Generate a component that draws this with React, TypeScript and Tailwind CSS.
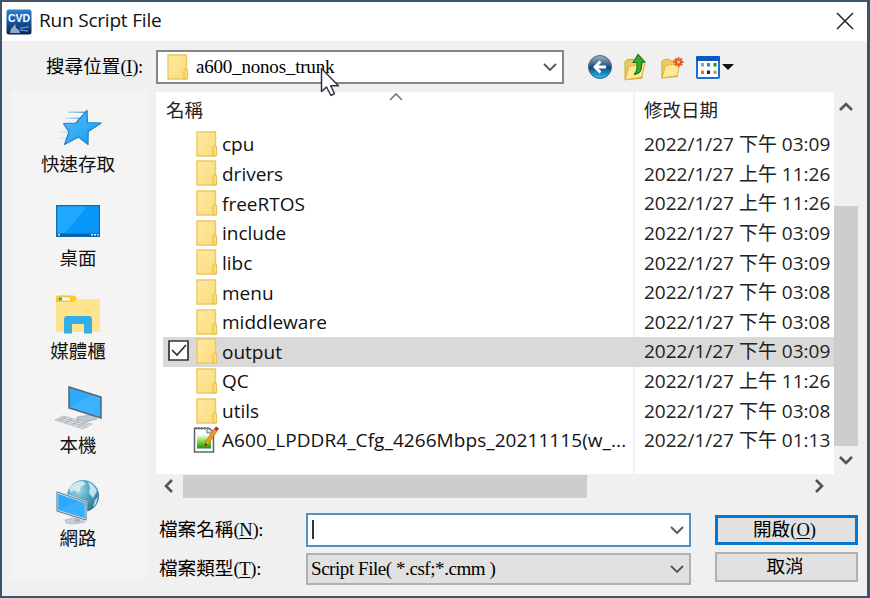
import React from "react";

const SANS = "font-['Open_Sans','Noto_Sans_CJK_TC',sans-serif]";
const SERIF = "font-['Liberation_Serif','Noto_Sans_CJK_TC',serif]";

const files = [
  { name: "cpu", date: "2022/1/27 下午 03:09" },
  { name: "drivers", date: "2022/1/27 上午 11:26" },
  { name: "freeRTOS", date: "2022/1/27 上午 11:26" },
  { name: "include", date: "2022/1/27 下午 03:09" },
  { name: "libc", date: "2022/1/27 下午 03:09" },
  { name: "menu", date: "2022/1/27 下午 03:08" },
  { name: "middleware", date: "2022/1/27 下午 03:08" },
  { name: "output", date: "2022/1/27 下午 03:09", selected: true },
  { name: "QC", date: "2022/1/27 上午 11:26" },
  { name: "utils", date: "2022/1/27 下午 03:08" },
];

function Folder() {
  return (
    <svg width="22" height="26" viewBox="0 0 22 26" className="block shrink-0">
      <defs>
        <linearGradient id="fold" x1="0" y1="0" x2="1" y2="1">
          <stop offset="0" stopColor="#ffe9a3" />
          <stop offset="1" stopColor="#fbdc7c" />
        </linearGradient>
      </defs>
      <path d="M1 1h18.5v24H1z" fill="url(#fold)" stroke="#ecc95c" strokeWidth="1.4" />
      <path d="M17 24.8v-8.3q0-1.5 1.8-1.5t1.8 1.5v8.3z" fill="#fbdc7c" stroke="#e8c04a" strokeWidth="1.1" />
    </svg>
  );
}

function Chevron({ dir, size = 14, color = "#555", weight = 1.8 }: { dir: "up" | "down" | "left" | "right"; size?: number; color?: string; weight?: number }) {
  const d = {
    down: "M1 4l6 6 6-6",
    up: "M1 10l6-6 6 6",
    left: "M10 1L4 7l6 6",
    right: "M4 1l6 6-6 6",
  }[dir];
  return (
    <svg width={size} height={size} viewBox="0 0 14 14" className="block shrink-0">
      <path d={d} fill="none" stroke={color} strokeWidth={weight} />
    </svg>
  );
}

function AppIcon() {
  return (
    <svg width="26" height="26" viewBox="0 0 26 26" className="block">
      <defs>
        <linearGradient id="app" x1="0" y1="0" x2="0" y2="1">
          <stop offset="0" stopColor="#2b82cf" />
          <stop offset=".45" stopColor="#1559a6" />
          <stop offset="1" stopColor="#0c2452" />
        </linearGradient>
      </defs>
      <rect x=".5" y=".5" width="25" height="25" rx="2.5" fill="url(#app)" />
      <text x="13" y="13" textAnchor="middle" textLength="22" lengthAdjust="spacingAndGlyphs" fontFamily="Liberation Sans" fontWeight="700" fontSize="11" fill="#fff">CVD</text>
      <path d="M4 24c1-4 1-5 3-6l2-3 1 4 3 2 1 3z" fill="#b9c9dc" opacity=".8" />
      <path d="M14 19l9-1M14 21l8 1" stroke="#5b8cc4" strokeWidth="1.4" />
    </svg>
  );
}

function BackIcon() {
  return (
    <svg width="26" height="26" viewBox="0 0 26 26">
      <defs>
        <linearGradient id="back" x1="0" y1="0" x2="0" y2="1">
          <stop offset="0" stopColor="#a3b3c6" />
          <stop offset=".35" stopColor="#4a6c94" />
          <stop offset=".52" stopColor="#0e4a80" />
          <stop offset="1" stopColor="#28c4f2" />
        </linearGradient>
      </defs>
      <circle cx="13" cy="13" r="11.5" fill="url(#back)" stroke="#456788" strokeWidth="1" />
      <path d="M12.5 6.5L6 13l6.5 6.5 1.9-1.9-2.9-3H19v-3.1h-7.5l2.9-3z" fill="#fff" />
    </svg>
  );
}

function OpenFolder() {
  return (
    <>
      <path d="M2 24.5V6.5l2-2 6-.6 2 2 7-1v18z" fill="#eac960" stroke="#d5a93a" strokeWidth="1" />
      <path d="M2 24.5l4-13.5 16-2.5-3.5 13.5z" fill="#ffe995" stroke="#dcb044" strokeWidth="1" />
    </>
  );
}

function UpIcon() {
  return (
    <svg width="26" height="28" viewBox="0 0 26 28">
      <g transform="translate(0 2.3)"><OpenFolder /></g>
      <path d="M11 21.500c3-2 3.300-6 3-12h-4L15 1.500l7 7.500-3.500.500c.600 7-.600 11-7.500 12z" fill="#38a834" stroke="#157a19" strokeWidth="1.100" />
    </svg>
  );
}

function NewFolderIcon() {
  return (
    <svg width="26" height="26" viewBox="0 0 26 26">
      <g transform="translate(1 1.500) scale(.92 .92)"><OpenFolder /></g>
      <path d="M19.500 3v10M14.500 8h10M16 4.500l7 7M23 4.500l-7 7" stroke="#f2521f" strokeWidth="1.900" />
      <circle cx="19.500" cy="8" r="2.400" fill="#ffc35c" stroke="#ee4a1b" strokeWidth="1.300" />
    </svg>
  );
}

function ViewIcon() {
  return (
    <svg width="24" height="23" viewBox="0 0 24 23" className="block">
      <rect x="1" y="1" width="22" height="21" rx="1" fill="#fff" stroke="#176fd8" strokeWidth="2" />
      <path d="M0 1q0-1 1-1h22q1 0 1 1v4H0z" fill="#0d59c0" />
      <path d="M5 7h3v3.500H5z" fill="#9c94cc" />
      <path d="M11 7h3v3.500h-3z" fill="#2d86d8" />
      <path d="M17.500 7h3v3.500h-3z" fill="#149228" />
      <path d="M5 14.500h3V18H5z" fill="#ef6733" />
      <path d="M11 14.500h3V18h-3z" fill="#14227e" />
      <path d="M17.500 14.500h3V18h-3z" fill="#d19c15" />
    </svg>
  );
}

function StarIcon() {
  return (
    <svg width="48" height="38" viewBox="0 0 48 38">
      <defs>
        <linearGradient id="star" x1="0" y1="0" x2="1" y2="1">
          <stop offset="0" stopColor="#53bdf9" />
          <stop offset="1" stopColor="#189bef" />
        </linearGradient>
        <linearGradient id="streak">
          <stop offset="0" stopColor="#7fc7ef" stopOpacity="0" />
          <stop offset="1" stopColor="#4aa4da" />
        </linearGradient>
      </defs>
      <path d="M14 2.500h18v1.500H14zM11 8.500h19V10H11zM5 22.500h14V24H5zM1 28.500h15V30H1z" fill="url(#streak)" />
      <path d="M33 1.300l.500 12.200 13.700.500-13 8.500-.200 13-9.500-7.500-14 7.500 4.500-12.500-5.500-8.500 12.500-.500z" fill="url(#star)" stroke="#2281bd" strokeWidth="1.200" strokeLinejoin="round" />
    </svg>
  );
}

function DesktopIcon() {
  return (
    <svg width="44" height="32" viewBox="0 0 44 32">
      <path d="M.700.700h42.600v30.600H.700z" fill="#16a0fb" stroke="#126ab0" strokeWidth="1.400" />
      <path d="M9 28L31 1.500h11.500V28z" fill="#0797fb" />
      <path d="M9 28L31 1.500H1.500V28z" fill="#1fa8fd" />
      <path d="M1 28.500h42V31H1z" fill="#0961a8" />
      <path d="M2 29h2v1.500H2zM35 29h2v1.500h-2zM38 29h2v1.500h-2zM41 29h1.500v1.500H41z" fill="#d7eefc" />
    </svg>
  );
}

function LibraryIcon() {
  return (
    <svg width="44" height="39" viewBox="0 0 44 39">
      <path d="M0 3q0-2.500 2.500-2.500h15L21 4h21q2 0 2 2v29q0 2-2 2H2q-2 0-2-2z" fill="#ffe48e" />
      <path d="M0 7V3Q0 .500 2.500.500H17q2 0 4 3-2 3.500-5 3.500z" fill="#f9c92c" />
      <path d="M3 2.500h11v3H3z" fill="#fff" />
      <path d="M3 2.500h3v3H3z" fill="#26a6b2" />
      <path d="M8 38.500V24q0-3 3-3h22q3 0 3 3v14.500h-8V29H16v9.500z" fill="#31b0e6" />
    </svg>
  );
}

function ComputerIcon() {
  return (
    <svg width="48" height="44" viewBox="0 0 48 44">
      <path d="M23 31l14-2 6 4-12 3-8-2z" fill="#bfc8ce" stroke="#9ba7ae" strokeWidth=".7" />
      <path d="M15 1l32 10v21L15 22z" fill="#2caafd" stroke="#58656e" strokeWidth="1.500" />
      <path d="M16.500 21L37 9l9 3v19z" fill="#62c3ff" opacity=".3" />
      <path d="M1 34l8-4 29 8-9 5z" fill="#dce1e3" stroke="#afb8bd" strokeWidth=".8" />
      <path d="M5 35l7-4M11 37l7-4M18 39l7-4M24 41l7-4M4 33l28 8M7 31.500l27 7.500" stroke="#a2abb0" strokeWidth=".8" fill="none" />
    </svg>
  );
}

function NetworkIcon() {
  return (
    <svg width="44" height="46" viewBox="0 0 44 46">
      <defs>
        <radialGradient id="globe" cx=".35" cy=".3" r=".8">
          <stop offset="0" stopColor="#a5dcec" />
          <stop offset=".5" stopColor="#4ba1bf" />
          <stop offset="1" stopColor="#2a718f" />
        </radialGradient>
      </defs>
      <circle cx="27" cy="17" r="16" fill="url(#globe)" />
      <path d="M13 9q6-7 14-7l3 3-5 3-2 6-5-3-3 3zM32 3q6 2 9 9l-4 7-4-5 1-5zM39 21l3-3-2 7-3 3z" fill="#d9eff2" opacity=".85" />
      <path d="M9 41l10-3 7 3 3 2-10 2-9-1z" fill="#c8cfd3" stroke="#a5adb2" strokeWidth=".6" />
      <path d="M19 36l5 2v5h-5z" fill="#a7b1b7" />
      <path d="M1 13l29 10v18L1 32z" fill="#2caafd" stroke="#e0e4e7" strokeWidth="2.400" />
      <path d="M1 13l29 10v18L1 32z" fill="none" stroke="#667b8a" strokeWidth="1" />
      <path d="M3 31L24 21.500l5 2v15z" fill="#61c3ff" opacity=".3" />
    </svg>
  );
}

function NoteIcon() {
  return (
    <svg width="26" height="27" viewBox="0 0 26 27" className="block shrink-0">
      <defs>
        <linearGradient id="note" x1="0" y1="0" x2="0" y2="1">
          <stop offset="0" stopColor="#f4fde0" />
          <stop offset=".6" stopColor="#68ca25" />
          <stop offset="1" stopColor="#159126" />
        </linearGradient>
      </defs>
      <path d="M1.500 2.500h15l4 4V26h-19z" fill="#fbfcfc" stroke="#5e666b" strokeWidth="1.500" />
      <path d="M2 2h14" stroke="#62696d" strokeWidth="2" strokeDasharray="1.500 1.500" />
      <path d="M4 9h14v13.500H4z" fill="url(#note)" />
      <path d="M14 2v5h6" fill="#ddd" stroke="#777" strokeWidth="1" />
      <path d="M11.500 21l1-5L21 3l3 2-8.500 13z" fill="#f39a20" stroke="#be6b12" strokeWidth=".7" />
      <path d="M21 3l2-2.500 3 2L24 5z" fill="#b8262e" />
      <path d="M11.500 21l1-4 2 1.500z" fill="#593618" />
    </svg>
  );
}

function Place({ icon, label }: { icon: React.ReactNode; label: string }) {
  return (
    <div className="flex h-[93.500px] flex-col items-center">
      <div className="flex h-[49px] items-center">{icon}</div>
      <span className="text-[18.500px] leading-[24px] text-[#111]">{label}</span>
    </div>
  );
}

function FieldLabel({ text, mnemonic, className }: { text: string; mnemonic: string; className: string }) {
  return (
    <span className={`whitespace-nowrap text-[18.600px] leading-[24px] text-black ${SERIF} ${className}`}>
      {text}
      <span className="tracking-[-0.300px]">(<span className="underline underline-offset-2">{mnemonic}</span>):</span>
    </span>
  );
}

export default function App() {
  return (
    <div className={`relative flex h-[598px] w-[870px] flex-col overflow-hidden border-2 border-r-[3px] border-[#3e546a] bg-[#f0f0f0] ${SANS}`}>
      <header className="flex h-[39px] shrink-0 items-center bg-white pl-1 pr-[13px]">
        <AppIcon />
        <h1 className="ml-[7px] pb-[4px] text-[19px] leading-[34px] tracking-[-0.200px] text-[#111]">Run Script File</h1>
        <svg width="18" height="18" viewBox="0 0 18 18" className="mb-[2px] ml-auto">
          <path d="M1 1l16 16M17 1L1 17" stroke="#222" strokeWidth="1.500" />
        </svg>
      </header>

      <div className="flex h-[51px] shrink-0 pt-[9px]">
        <div className="flex h-[34px] w-[154px] items-center pl-[44px]">
          <FieldLabel text="搜尋位置" mnemonic="I" className="" />
        </div>
        <div className="flex h-[34px] w-[408px] items-center border-2 border-[#858585] bg-white pl-[9px] pr-[5px]">
          <Folder />
          <span className={`ml-[7px] text-[19px] leading-[24px] tracking-[-0.200px] text-black ${SERIF}`}>a600_nonos_trunk</span>
          <div className="ml-auto"><Chevron dir="down" /></div>
        </div>
        <div className="flex h-[34px] items-center pl-[23px]">
          <BackIcon />
          <div className="ml-[10px]"><UpIcon /></div>
          <div className="ml-[10px]"><NewFolderIcon /></div>
          <div className="ml-[11px]"><ViewIcon /></div>
          <svg width="12" height="6" viewBox="0 0 12 6" className="ml-[2px]"><path d="M0 0h12L6 6z" fill="#111" /></svg>
        </div>
      </div>

      <div className="flex">
        <nav className="ml-[9px] h-[487px] w-[136px] shrink-0 bg-[#f4f4f4] pr-[2px] pt-[11px]">
          <Place icon={<StarIcon />} label="快速存取" />
          <Place icon={<DesktopIcon />} label="桌面" />
          <Place icon={<LibraryIcon />} label="媒體櫃" />
          <Place icon={<ComputerIcon />} label="本機" />
          <Place icon={<NetworkIcon />} label="網路" />
        </nav>

        <main className="ml-[9px] w-[702px] shrink-0">
          <div className="flex h-[382px]">
            <section className="w-[678px] overflow-hidden bg-white">
              <div className="flex h-[38px]">
                <div className="flex w-[477px] justify-between pl-[10px]">
                  <span className="text-[18.500px] leading-[36px] text-[#222]">名稱</span>
                  <div className="mr-[230px] -mt-[2px]"><Chevron dir="up" color="#777" weight={1.600} /></div>
                </div>
                <div className="flex-1 border-l-2 border-[#eef4fa] pl-[9px] text-[18.500px] leading-[36px] text-[#222]">修改日期</div>
              </div>
              <div className="flex h-[344px] flex-col">
                {files.map((f) => (
                  <div key={f.name} className={`ml-[7px] flex h-[29.650px] shrink-0 ${f.selected ? "bg-[#d9d9d9]" : ""}`}>
                    <div className="flex w-[470px] items-center">
                      <div className="w-[33px] pl-[5px]">
                        {f.selected && (
                          <svg width="21" height="21" viewBox="0 0 21 21" className="mb-[3px]">
                            <path d="M1 1h19v19H1z" fill="#fff" stroke="#333" strokeWidth="1.700" />
                            <path d="M4 10l5 5 9-10" fill="none" stroke="#333" strokeWidth="1.700" />
                          </svg>
                        )}
                      </div>
                      <div className="-mt-[2px]"><Folder /></div>
                      <span className="ml-[4px] text-[19px] leading-[29px] text-[#111]">{f.name}</span>
                    </div>
                    <div className={`flex-1 whitespace-nowrap border-l-2 pl-[9px] text-[19px] leading-[28px] text-[#222] ${f.selected ? "border-[#d9d9d9]" : "border-[#eef4fa]"}`}>{f.date}</div>
                  </div>
                ))}
                <div className="ml-[7px] flex flex-1">
                  <div className="flex h-[29px] w-[470px] items-center pl-[30px]">
                    <div className="-mt-[2px]"><NoteIcon /></div>
                    <span className="ml-[3px] whitespace-nowrap text-[19px] leading-[29px] tracking-[0.070px] text-[#111]">A600_LPDDR4_Cfg_4266Mbps_20211115(w_...</span>
                  </div>
                  <div className="flex-1 whitespace-nowrap border-l-2 border-[#eef4fa] pl-[9px] text-[19px] leading-[28px] text-[#222]">2022/1/27 下午 01:13</div>
                </div>
              </div>
            </section>
            <div className="flex w-[24px] flex-col items-center bg-[#f0f0f0] pt-[8px]">
              <Chevron dir="up" weight={2.600} />
              <div className="mt-[92px] h-[240px] w-[24px] shrink-0 bg-[#cdcdcd]" />
              <div className="mt-[7px]"><Chevron dir="down" weight={2.600} /></div>
            </div>
          </div>

          <div className="flex h-[24px] items-center pl-[6px]">
            <Chevron dir="left" weight={2.600} />
            <div className="ml-[7px] h-[23px] w-[404px] bg-[#cdcdcd]" />
            <div className="ml-[225px]"><Chevron dir="right" weight={2.600} /></div>
          </div>

          <div className="flex pt-[15px]">
            <div className="flex w-[535px] flex-col gap-[6px]">
              <div className="flex items-center">
                <FieldLabel text="檔案名稱" mnemonic="N" className="w-[150px] pl-[3px]" />
                <div className="flex h-[34px] w-[385px] items-center border-2 border-[#5691bd] bg-white pl-[4px] pr-[5px]">
                  <div className="mb-[2px] h-[19px] w-[2px] bg-[#333]" />
                  <div className="ml-auto"><Chevron dir="down" /></div>
                </div>
              </div>
              <div className="flex items-center">
                <FieldLabel text="檔案類型" mnemonic="T" className="w-[150px] pl-[3px]" />
                <div className="flex h-[32px] w-[385px] items-center border-2 border-[#b0b0b0] bg-[#e1e1e1] pl-[3px] pr-[5px]">
                  <span className={`text-[19px] leading-[24px] tracking-[-0.440px] text-black ${SERIF}`}>Script File( *.csf;*.cmm )</span>
                  <div className="ml-auto"><Chevron dir="down" /></div>
                </div>
              </div>
            </div>
            <div className="ml-[24px] flex flex-col gap-[7px] pt-[2px]">
              <button className="flex h-[30px] w-[143px] items-center justify-center border-[3px] border-[#0078d7] bg-[#e1e1e1] pr-[4px]">
                <span className={`text-[18.600px] leading-[24px] text-black ${SERIF}`}>開啟<span>(<span className="underline underline-offset-2">O</span>)</span></span>
              </button>
              <button className={`flex h-[30px] w-[143px] items-center justify-center border-2 border-[#b0b0b0] bg-[#e1e1e1] pr-[3px] text-[18.600px] leading-[24px] text-black ${SERIF}`}>取消</button>
            </div>
          </div>
        </main>
      </div>

      <svg width="22" height="32" viewBox="0 0 22 32" className="absolute left-[318px] top-[65px]">
        <path d="M1.500 1.500v23l5-4.500 4.500 8.500 3.500-1.800-3.800-8h7.800z" fill="#fff" stroke="#33333f" strokeWidth="1.500" strokeLinejoin="round" />
      </svg>
    </div>
  );
}
